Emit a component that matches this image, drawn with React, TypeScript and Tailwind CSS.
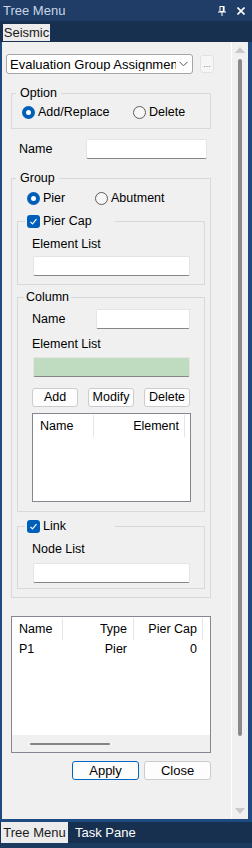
const font = "font-['Liberation_Sans',Arial,sans-serif]";

function Radio({ checked, label }: { checked?: boolean; label: string }) {
  return (
    <div className="flex items-center gap-[3px]">
      {checked ? (
        <span className="w-[13px] h-[13px] rounded-full bg-[#005fb8] flex items-center justify-center">
          <span className="w-[5px] h-[5px] rounded-full bg-white" />
        </span>
      ) : (
        <span className="w-[13px] h-[13px] rounded-full border border-[#5c5c5c] bg-[#f6f6f6]" />
      )}
      <span className="leading-4">{label}</span>
    </div>
  );
}

function Check({ label }: { label: string }) {
  return (
    <span className="flex items-center gap-[3px]">
      <span className="w-[13px] h-[13px] rounded-[3px] bg-[#005fb8] flex items-center justify-center">
        <svg width="9" height="9" viewBox="0 0 9 9">
          <polyline points="1.5,4.8 3.5,6.8 7.5,2.2" fill="none" stroke="white" strokeWidth="1.2" />
        </svg>
      </span>
      <span className="leading-4">{label}</span>
    </span>
  );
}

function Field({ className = "" }: { className?: string }) {
  return (
    <div
      className={`h-[20px] bg-white border border-[#e4e4e4] border-b-[#868686] rounded-[2px] ${className}`}
    />
  );
}

function Btn({ label, primary, className = "" }: { label: string; primary?: boolean; className?: string }) {
  return (
    <div
      className={`flex items-center justify-center bg-[#fdfdfd] rounded-[3px] border leading-none ${
        primary ? "border-[#0067c0]" : "border-[#cccccc]"
      } ${className}`}
    >
      {label}
    </div>
  );
}

export default function App() {
  return (
    <div className={`w-[252px] h-[848px] flex flex-col text-[12.5px] text-black ${font}`}>
      {/* title bar */}
      <div className="h-[21px] bg-[#1f3d66] flex items-center pl-[3px] pr-[7px]">
        <span className="text-[13px] text-[#c9d5e6] leading-none flex-1">Tree Menu</span>
        <svg width="8" height="10" viewBox="0 0 8 10" className="mr-[11px] mt-[1px]">
          <rect x="2" y="0.5" width="4" height="5" fill="none" stroke="white" />
          <line x1="5.5" y1="0.5" x2="5.5" y2="5.5" stroke="white" strokeWidth="1.5" />
          <line x1="0" y1="6" x2="8" y2="6" stroke="white" />
          <line x1="4" y1="6" x2="4" y2="10" stroke="white" />
        </svg>
        <svg width="8" height="8" viewBox="0 0 8 8">
          <path d="M0.5 0.5 L7.5 7.5 M7.5 0.5 L0.5 7.5" stroke="white" strokeWidth="1.6" />
        </svg>
      </div>

      {/* tab strip */}
      <div className="h-[21px] bg-[#17304f] flex items-start pt-[3px] pl-[3px]">
        <div className="h-[17px] w-[47px] bg-[#ececec] text-[#1a1a1a] text-[13px] flex items-center justify-center leading-none">
          Seismic
        </div>
      </div>

      {/* panel */}
      <div className="h-[780px] bg-[#1e4a82] pl-[2px] pr-[4px] pb-[3px] flex">
        <div className="flex-1 bg-[#f0f0f0] flex">
          <div className="w-[229px] flex flex-col">
            {/* combo */}
            <div className="mt-[12px] pl-[4px] flex items-center">
              <div className="w-[187px] h-[20px] bg-white border border-[#a5a5a5] rounded-[3px] flex items-center pl-[3px] pr-[4px]">
                <span className="flex-1 overflow-hidden whitespace-nowrap text-[13px] leading-none">
                  Evaluation Group Assignment
                </span>
                <svg width="9" height="6" viewBox="0 0 9 6" className="ml-[3px]">
                  <polyline points="0.5,0.8 4.5,4.8 8.5,0.8" fill="none" stroke="#555" />
                </svg>
              </div>
              <div className="ml-[7px] w-[14px] h-[18px] bg-[#f6f6f6] border border-[#e2e2e2] rounded-[3px] flex items-end justify-center pb-[3px] text-[9px] text-[#777] leading-none">
                ...
              </div>
            </div>

            {/* option */}
            <fieldset className="mt-[11px] ml-[9px] w-[200px] border border-[#d9d9d9]">
              <legend className="ml-[4px] px-[4px] leading-4">Option</legend>
              <div className="mt-[3px] pl-[10px] pb-[8px] flex">
                <div className="w-[111px]">
                  <Radio checked label="Add/Replace" />
                </div>
                <Radio label="Delete" />
              </div>
            </fieldset>

            {/* name */}
            <div className="mt-[10px] pl-[17px] flex items-center">
              <span className="w-[67px] leading-4">Name</span>
              <Field className="w-[121px]" />
            </div>

            {/* group */}
            <fieldset className="mt-[11px] ml-[9px] w-[200px] border border-[#d9d9d9]">
              <legend className="ml-[4px] px-[4px] leading-4">Group</legend>
              <div className="px-[5px] pb-[8px]">
                <div className="mt-[4px] pl-[10px] flex">
                  <div className="w-[68px]">
                    <Radio checked label="Pier" />
                  </div>
                  <Radio label="Abutment" />
                </div>

                <fieldset className="mt-[7px] border border-[#d9d9d9]">
                  <legend className="ml-[7px] w-[90px] pl-[2px]">
                    <Check label="Pier Cap" />
                  </legend>
                  <div className="pl-[14px] pb-[8px]">
                    <div className="mt-[7px] leading-4">Element List</div>
                    <Field className="mt-[4px] ml-px w-[157px]" />
                  </div>
                </fieldset>

                <fieldset className="mt-[4px] border border-[#d9d9d9]">
                  <legend className="ml-[6px] px-[2px] leading-4">Column</legend>
                  <div className="pl-[14px] pb-[9px]">
                    <div className="mt-[4px] flex items-center">
                      <span className="w-[64px] leading-4">Name</span>
                      <Field className="w-[94px]" />
                    </div>
                    <div className="mt-[7px] leading-4">Element List</div>
                    <div className="mt-[5px] ml-px w-[157px] h-[20px] bg-[#c0dcc0] border border-[#e4e4e4] border-b-[#868686] rounded-[2px]" />
                    <div className="mt-[11px] flex gap-[10px]">
                      <Btn label="Add" className="w-[46px] h-[19px]" />
                      <Btn label="Modify" className="w-[46px] h-[19px]" />
                      <Btn label="Delete" className="w-[46px] h-[19px]" />
                    </div>
                    <div className="mt-[6px] w-[159px] h-[89px] bg-white border border-[#828790]">
                      <div className="h-[24px] flex items-center">
                        <span className="w-[60px] pl-[7px] leading-4 self-center">Name</span>
                        <span className="w-px h-[22px] bg-[#e5e5e5]" />
                        <span className="w-[90px] text-right pr-[5px] leading-4">Element</span>
                        <span className="w-px h-[22px] bg-[#e5e5e5]" />
                      </div>
                    </div>
                  </div>
                </fieldset>

                <fieldset className="mt-[6px] border border-[#d9d9d9]">
                  <legend className="ml-[7px] w-[90px] pl-[2px]">
                    <Check label="Link" />
                  </legend>
                  <div className="pl-[14px] pb-[5px]">
                    <div className="mt-[7px] leading-4">Node List</div>
                    <Field className="mt-[6px] ml-px w-[157px]" />
                  </div>
                </fieldset>
              </div>
            </fieldset>

            {/* result list */}
            <div className="mt-[18px] ml-[9px] w-[200px] h-[137px] bg-white border border-[#828790] flex flex-col">
              <div className="h-[24px] flex items-center">
                <span className="w-[50px] pl-[7px] leading-4">Name</span>
                <span className="w-px h-[22px] bg-[#e5e5e5]" />
                <span className="w-[70px] text-right pr-[6px] leading-4">Type</span>
                <span className="w-px h-[22px] bg-[#e5e5e5]" />
                <span className="w-[68px] text-right pr-[5px] leading-4">Pier Cap</span>
                <span className="w-px h-[22px] bg-[#e5e5e5]" />
              </div>
              <div className="h-[16px] flex items-center">
                <span className="w-[50px] pl-[7px] leading-4">P1</span>
                <span className="w-px" />
                <span className="w-[70px] text-right pr-[6px] leading-4">Pier</span>
                <span className="w-px" />
                <span className="w-[68px] text-right pr-[5px] leading-4">0</span>
              </div>
              <div className="flex-1" />
              <div className="h-[17px] bg-[#f0f0f0] flex items-center pl-[18px]">
                <div className="w-[80px] h-[2px] bg-[#858585] rounded-full" />
              </div>
            </div>

            <div className="mt-[8px] w-[209px] flex justify-end gap-[5px]">
              <Btn primary label="Apply" className="w-[67px] h-[19px] text-[13px]" />
              <Btn label="Close" className="w-[67px] h-[19px] text-[13px]" />
            </div>
          </div>

          {/* scrollbar */}
          <div className="w-px bg-white" />
          <div className="flex-1 flex flex-col items-center pt-[5px] pb-[5px]">
            <svg width="10" height="6" viewBox="0 0 10 6">
              <polygon points="5,0 10,6 0,6" fill="#c9c9c9" />
            </svg>
            <div className="mt-[6px] w-[4px] h-[677px] rounded-full bg-[#8a8a8a]" />
            <div className="flex-1" />
            <svg width="10" height="6" viewBox="0 0 10 6">
              <polygon points="0,0 10,0 5,6" fill="#c9c9c9" />
            </svg>
          </div>
        </div>
      </div>

      {/* bottom tabs */}
      <div className="flex-1 bg-[#17304f] flex items-start border-b-[5px] border-[#1c3a60]">
        <div className="ml-[1px] h-[21px] w-[67px] bg-[#ececec] text-[#1a1a1a] text-[13px] flex items-center justify-center leading-none">
          Tree Menu
        </div>
        <div className="ml-[7px] h-[21px] flex items-center text-white text-[13px] leading-none">
          Task Pane
        </div>
      </div>
    </div>
  );
}
